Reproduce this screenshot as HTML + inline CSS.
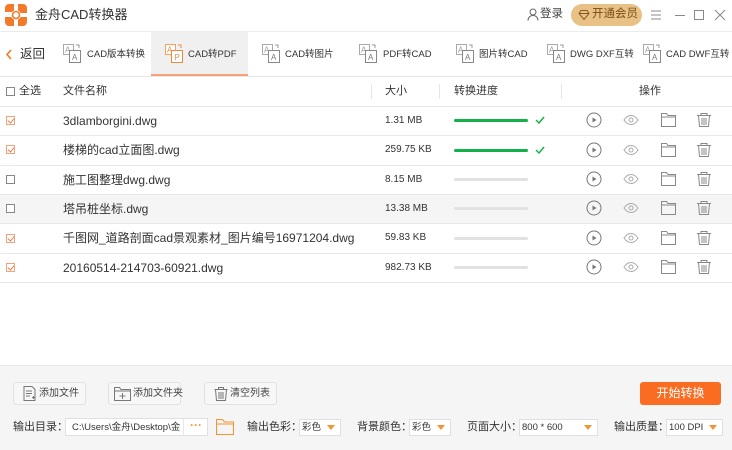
<!DOCTYPE html>
<html><head><meta charset="utf-8">
<style>
*{margin:0;padding:0;box-sizing:border-box}
body{width:732px;height:450px;overflow:hidden;background:#fff;font-family:"Liberation Sans","Noto Sans CJK SC",sans-serif;color:#333;position:relative;line-height:1}
.a{position:absolute;white-space:nowrap;line-height:1}
.t12{font-size:12px}
.t11{font-size:11px}
.t10{font-size:10px}
.tb{font-size:9.5px}
.hl{position:absolute;left:0;width:732px;height:1px;background:#e8e8e8}
.cb{position:absolute;width:9px;height:9px;border:1px solid #888;background:#fff}
.cb.on{border-color:#f4a27c}
.cb.on:after{content:"";position:absolute;left:2px;top:0px;width:3px;height:5px;border:solid #f07c44;border-width:0 1.3px 1.3px 0;transform:rotate(40deg)}
.bar{position:absolute;left:454px;width:74px;height:3px;border-radius:2px;background:#e2e2e2}
.bar.g{background:#12b14a}
.btn{position:absolute;top:382px;height:23px;border:1px solid #e2e2e2;border-radius:3px;background:#f7f7f7;font-size:10px;color:#444}
.sel{position:absolute;top:419px;height:17px;border:1px solid #e0e0e0;background:#fff;font-size:9.5px;color:#333;padding:3px 0 0 2px;line-height:1}
.sel:after{content:"";position:absolute;right:5px;top:5px;border:4px solid transparent;border-top:5px solid #f39533;border-bottom:0}
.lb{position:absolute;top:422px;font-size:11px;color:#333;line-height:1;white-space:nowrap}
</style></head><body>
<svg class="a" style="left:5px;top:4px" width="22" height="22" viewBox="0 0 22 22">
<path d="M0 4a4 4 0 0 1 4-4h5v8H0z M13 0h5a4 4 0 0 1 4 4v5h-9z M0 13h9v9H4a4 4 0 0 1-4-4z M13 13h9v5a4 4 0 0 1-4 4h-5z" fill="#f47a2b"/>
<circle cx="11" cy="11" r="5" fill="#fff"/><circle cx="11" cy="11" r="3.5" fill="none" stroke="#f47a2b" stroke-width="1.6"/>
</svg>
<div class="a" style="left:35px;top:8px;font-size:13px;color:#333">金舟CAD转换器</div>
<svg class="a" style="left:527px;top:8px" width="12" height="13" viewBox="0 0 12 13"><circle cx="6" cy="4" r="3" fill="none" stroke="#666" stroke-width="1"/><path d="M1 12.5c0-3 2.2-5 5-5s5 2 5 5" fill="none" stroke="#666"/></svg>
<div class="a" style="left:540px;top:9px;font-size:11.5px;color:#444">登录</div>
<div class="a" style="left:571px;top:4px;width:71px;height:22px;border-radius:11px;background:#e8c186"></div>
<svg class="a" style="left:578px;top:9px" width="12" height="12" viewBox="0 0 12 12"><path d="M3 1.5h6l2 3-5 6-5-6z M1 4.5h10" fill="none" stroke="#8a5a1c" stroke-width="1"/></svg>
<div class="a" style="left:592px;top:9px;font-size:11.5px;color:#7a4e16">开通会员</div>
<svg class="a" style="left:650px;top:9px" width="12" height="12"><path d="M1 2h10M1 6h10M1 10h10" stroke="#888" stroke-width="1"/></svg>
<svg class="a" style="left:674px;top:9px" width="12" height="12"><path d="M1 6.5h10" stroke="#888"/></svg>
<svg class="a" style="left:693px;top:9px" width="12" height="12"><rect x="1.5" y="1.5" width="9" height="9" fill="none" stroke="#888"/></svg>
<svg class="a" style="left:714px;top:9px" width="12" height="12"><path d="M1 1l10 10M11 1L1 11" stroke="#888"/></svg>
<div class="hl" style="top:31px;background:#ececec"></div>
<div class="a" style="left:151px;top:32px;width:97px;height:44px;background:#f0f0f0"></div>
<div class="a" style="left:151px;top:74px;width:97px;height:2px;background:#f7a27a"></div>
<svg class="a" style="left:5px;top:49px" width="8" height="11"><path d="M6 1L2 5.5 6 10" fill="none" stroke="#f47a2b" stroke-width="1.6"/></svg>
<div class="a" style="left:20px;top:48px;font-size:12.5px;color:#333">返回</div>
<svg width="0" height="0" style="position:absolute"><defs>
<g id="ic"><rect x="0.5" y="0.5" width="10" height="10" fill="#fff" stroke="#aaa"/><text x="2" y="8.5" font-size="8" fill="#999" font-family="Liberation Sans">A</text><rect x="6.5" y="6.5" width="11" height="12" fill="#fff" stroke="#888"/><text x="9" y="16" font-size="8" fill="#777" font-family="Liberation Sans">A</text><path d="M13 1h3v3" fill="none" stroke="#999"/></g>
</defs></svg>
<svg class="a" style="left:63px;top:44px" width="19" height="20"><use href="#ic"/></svg>
<div class="a tb" style="left:87px;top:50px">CAD版本转换</div>
<svg class="a" style="left:165px;top:44px" width="19" height="20"><rect x="0.5" y="0.5" width="10" height="10" fill="#fff" stroke="#f5a15f"/><text x="2" y="8.5" font-size="8" fill="#f08a3a" font-family="Liberation Sans">A</text><rect x="6.5" y="6.5" width="11" height="12" fill="#fff" stroke="#f08a3a"/><text x="9.5" y="16" font-size="8" fill="#f08a3a" font-family="Liberation Sans">P</text><path d="M13 1h3v3" fill="none" stroke="#f08a3a"/></svg>
<div class="a tb" style="left:188px;top:50px">CAD转PDF</div>
<svg class="a" style="left:262px;top:44px" width="19" height="20"><use href="#ic"/></svg>
<div class="a tb" style="left:285px;top:50px">CAD转图片</div>
<svg class="a" style="left:359px;top:44px" width="19" height="20"><use href="#ic"/></svg>
<div class="a tb" style="left:383px;top:50px">PDF转CAD</div>
<svg class="a" style="left:456px;top:44px" width="19" height="20"><use href="#ic"/></svg>
<div class="a tb" style="left:479px;top:50px">图片转CAD</div>
<svg class="a" style="left:547px;top:44px" width="19" height="20"><use href="#ic"/></svg>
<div class="a tb" style="left:570px;top:50px">DWG DXF互转</div>
<svg class="a" style="left:643px;top:44px" width="19" height="20"><use href="#ic"/></svg>
<div class="a tb" style="left:666px;top:50px">CAD DWF互转</div>
<div class="hl" style="top:76px;background:#e6e6e6"></div>
<div class="cb" style="left:6px;top:87px"></div>
<div class="a t11" style="left:19px;top:86px">全选</div>
<div class="a t11" style="left:63px;top:86px">文件名称</div>
<div class="a" style="left:371px;top:84px;width:1px;height:15px;background:#e6e6e6"></div>
<div class="a t11" style="left:385px;top:86px">大小</div>
<div class="a" style="left:439px;top:84px;width:1px;height:15px;background:#e6e6e6"></div>
<div class="a t11" style="left:454px;top:86px">转换进度</div>
<div class="a" style="left:561px;top:84px;width:1px;height:15px;background:#e6e6e6"></div>
<div class="a t11" style="left:639px;top:86px">操作</div>
<div class="hl" style="top:106px"></div>
<div class="a" style="left:0;top:194px;width:732px;height:29px;background:#f5f5f5"></div>
<div class="cb on" style="left:6px;top:116px"></div><div class="a t12" style="left:63px;top:115px">3dlamborgini.dwg</div><div class="a t10" style="left:385px;top:116px">1.31 MB</div><div class="bar g" style="top:119px"></div>
<div class="hl" style="top:135px"></div>
<div class="cb on" style="left:6px;top:145px"></div><div class="a t12" style="left:63px;top:144px">楼梯的cad立面图.dwg</div><div class="a t10" style="left:385px;top:145px">259.75 KB</div><div class="bar g" style="top:149px"></div>
<div class="hl" style="top:165px"></div>
<div class="cb" style="left:6px;top:175px"></div><div class="a t12" style="left:63px;top:174px">施工图整理dwg.dwg</div><div class="a t10" style="left:385px;top:175px">8.15 MB</div><div class="bar" style="top:178px"></div>
<div class="hl" style="top:194px"></div>
<div class="cb" style="left:6px;top:204px"></div><div class="a t12" style="left:63px;top:203px">塔吊桩坐标.dwg</div><div class="a t10" style="left:385px;top:204px">13.38 MB</div><div class="bar" style="top:207px"></div>
<div class="hl" style="top:223px"></div>
<div class="cb on" style="left:6px;top:234px"></div><div class="a t12" style="left:63px;top:232px">千图网_道路剖面cad景观素材_图片编号16971204.dwg</div><div class="a t10" style="left:385px;top:233px">59.83 KB</div><div class="bar" style="top:237px"></div>
<div class="hl" style="top:253px"></div>
<div class="cb on" style="left:6px;top:263px"></div><div class="a t12" style="left:63px;top:262px">20160514-214703-60921.dwg</div><div class="a t10" style="left:385px;top:263px">982.73 KB</div><div class="bar" style="top:266px"></div>
<div class="hl" style="top:282px"></div>
<svg class="a" style="left:535px;top:116px" width="10" height="8"><path d="M1 4l3 3 5-6" fill="none" stroke="#12b14a" stroke-width="1.4"/></svg>
<svg class="a" style="left:535px;top:146px" width="10" height="8"><path d="M1 4l3 3 5-6" fill="none" stroke="#12b14a" stroke-width="1.4"/></svg>
<svg width="0" height="0" style="position:absolute"><defs>
<g id="ops">
<circle cx="8" cy="8" r="7" fill="none" stroke="#777" stroke-width="1"/><path d="M6.5 5.5v5l4-2.5z" fill="#777"/>
<path d="M38 8c2-3 4-4.5 7-4.5s5 1.5 7 4.5c-2 3-4 4.5-7 4.5s-5-1.5-7-4.5z" fill="none" stroke="#aaa"/><circle cx="45" cy="8" r="2" fill="none" stroke="#aaa"/>
<path d="M75.5 1.5h5l1.5 2h7.5v11h-14z M75.5 5h14" fill="none" stroke="#888"/>
<path d="M111 3.5h14 M115 3.5v-2h6v2 M112.5 3.5l1 11h9l1-11 M116 6v7 M118 6v7 M120 6v7" fill="none" stroke="#888"/>
</g></defs></svg>
<svg class="a" style="left:586px;top:112px" width="130" height="17"><use href="#ops"/></svg>
<svg class="a" style="left:586px;top:142px" width="130" height="17"><use href="#ops"/></svg>
<svg class="a" style="left:586px;top:171px" width="130" height="17"><use href="#ops"/></svg>
<svg class="a" style="left:586px;top:200px" width="130" height="17"><use href="#ops"/></svg>
<svg class="a" style="left:586px;top:230px" width="130" height="17"><use href="#ops"/></svg>
<svg class="a" style="left:586px;top:259px" width="130" height="17"><use href="#ops"/></svg>
<div class="a" style="left:0;top:365px;width:732px;height:85px;background:#f5f5f5;border-top:1px solid #e8e8e8"></div>
<div class="btn" style="left:13px;width:73px"><svg class="a" style="left:9px;top:3px" width="13" height="15"><path d="M1 .5h8l3 3v11H1z M3 5h6M3 7.5h6M3 10h4 M9 11.5h3M10.5 10v3" fill="none" stroke="#777"/></svg><span class="a" style="left:25px;top:6px">添加文件</span></div>
<div class="btn" style="left:108px;width:73px"><svg class="a" style="left:5px;top:3px" width="17" height="15"><path d="M.5 1.5h5l1.5 2h9.5v11H.5z M.5 5h16 M8.5 7v6M5.5 10h6" fill="none" stroke="#777"/></svg><span class="a" style="left:24px;top:6px">添加文件夹</span></div>
<div class="btn" style="left:204px;width:73px"><svg class="a" style="left:9px;top:3px" width="14" height="16"><path d="M.5 3.5h13 M4.5 3.5v-2h5v2 M1.5 3.5l1 11h9l1-11 M5 6v7M7 6v7M9 6v7" fill="none" stroke="#777"/></svg><span class="a" style="left:25px;top:6px">清空列表</span></div>
<div class="a" style="left:640px;top:382px;width:81px;height:23px;border-radius:3px;background:#f96c22;color:#fff;font-size:12px;text-align:center;line-height:23px">开始转换</div>
<div class="lb" style="left:13px">输出目录：</div>
<div class="a" style="left:65px;top:418px;width:143px;height:18px;border:1px solid #e0e0e0;background:#fff;overflow:hidden"><span class="a" style="left:6px;top:4px;font-size:9.5px;color:#333">C:\Users\金舟\Desktop\金</span><div class="a" style="left:117px;top:0;width:25px;height:16px;background:#fff;border-left:1px solid #e8e8e8;color:#f39533;font-size:12px;line-height:12px;text-align:center;font-weight:bold">···</div></div>
<svg class="a" style="left:216px;top:418px" width="18" height="17"><path d="M.5 1.5h6l2 2.5h9v12.5H.5z M.5 6h17" fill="none" stroke="#f39533" stroke-width="1.1"/></svg>
<div class="lb" style="left:247px">输出色彩：</div>
<div class="sel" style="left:299px;width:42px">彩色</div>
<div class="lb" style="left:357px">背景颜色：</div>
<div class="sel" style="left:409px;width:42px">彩色</div>
<div class="lb" style="left:467px">页面大小：</div>
<div class="sel" style="left:519px;width:79px">800 * 600</div>
<div class="lb" style="left:614px">输出质量：</div>
<div class="sel" style="left:666px;width:57px">100 DPI</div>
</body></html>
